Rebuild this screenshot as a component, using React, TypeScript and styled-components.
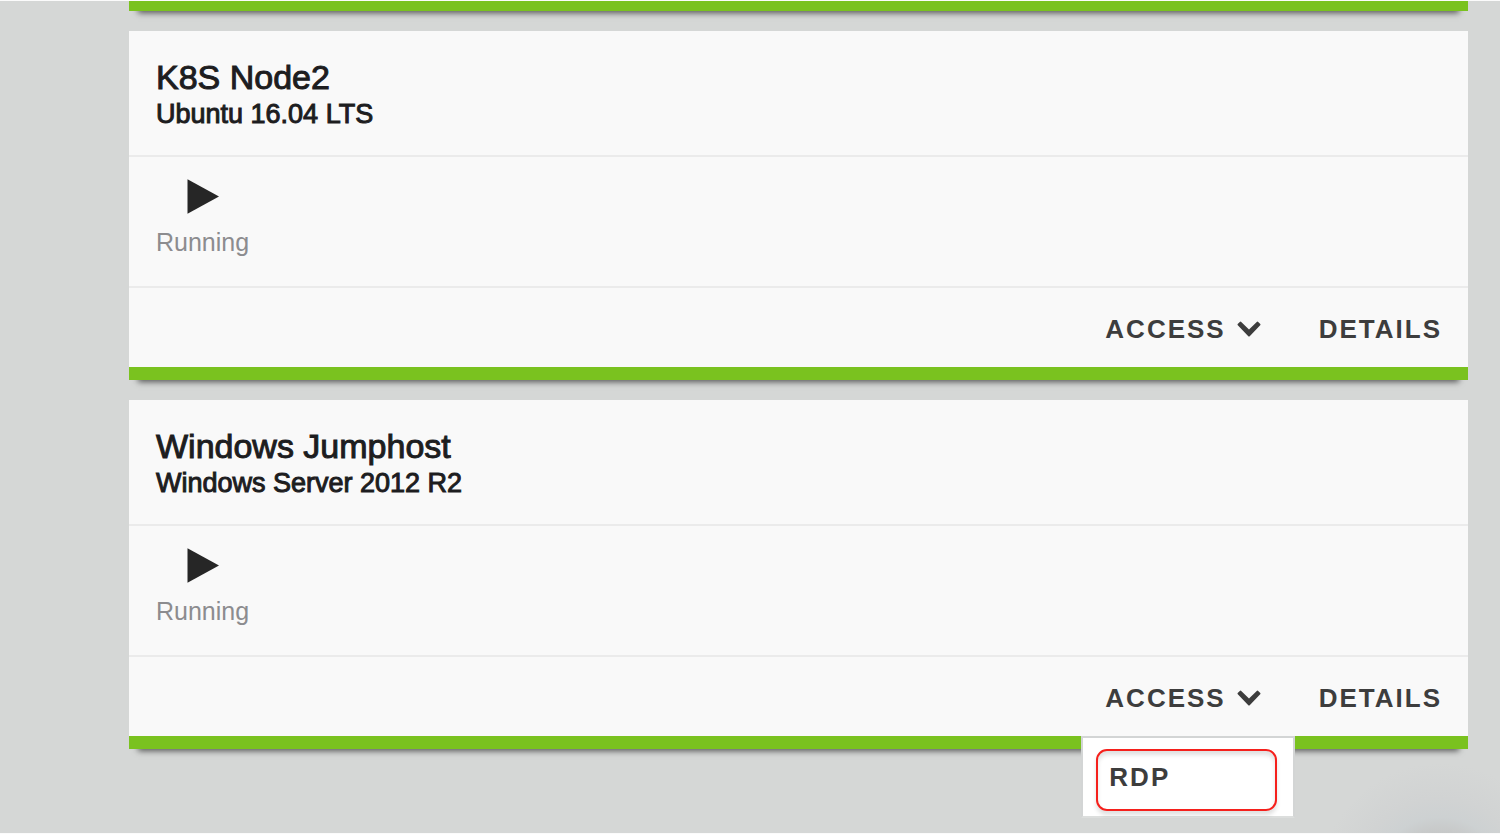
import React from 'react';
import styled, { createGlobalStyle } from 'styled-components';

const GlobalStyle = createGlobalStyle`
  *, *::before, *::after { box-sizing: border-box; }
  body {
    margin: 0;
    background: #d5d7d6;
    font-family: "Liberation Sans", Arial, Helvetica, sans-serif;
  }
`;

const Page = styled.main`
  min-height: 100vh;
  padding: 0 32px 84px 129px;
  border-top: 1px solid #fbfbfb;
  border-bottom: 1px solid #fbfbfb;
  background: radial-gradient(circle at right 60px bottom -50px, #c2c4c4 40px, #c8caca 54px, #cdd1d2 66px, #d1d3d3 85px, #d5d7d6 120px) #d5d7d6;
  overflow: clip;
`;

const MachineList = styled.div`
  display: flex;
  flex-direction: column;
  gap: 20px;
`;

const Card = styled.article`
  background: #f9f9f9;
  border-bottom: 13px solid #7ac21f;
  box-shadow: 0 11px 6px -9px rgba(0, 0, 0, 0.6);
`;

/* The card above the fold, scrolled out except for its status bar */
const ScrolledCard = styled(Card)`
  height: 92px;
  margin-top: -82px;
`;

const CardHeader = styled.header`
  padding: 27px 27px 23px;
  border-bottom: 2px solid #ebebeb;
  color: #1d1d1f;
`;

const Name = styled.h2`
  margin: 0;
  font-size: 34px;
  line-height: 38px;
  font-weight: 400;
  -webkit-text-stroke: 1px currentColor;
`;

const System = styled.p`
  margin: 0;
  font-size: 27px;
  line-height: 36px;
  -webkit-text-stroke: 1px currentColor;
`;

const Status = styled.section`
  display: flex;
  flex-direction: column;
  align-items: flex-start;
  padding: 22px 27px 25px;
  border-bottom: 2px solid #ebebeb;
`;

const StatusItem = styled.div`
  display: flex;
  flex-direction: column;
  align-items: center;
  gap: 10px;
  color: #8c8c8f;
  font-size: 25px;
  line-height: 37px;
`;

const Footer = styled.footer`
  display: flex;
  justify-content: flex-end;
  gap: 58px;
  height: 79px;
  padding: 0 26px;
`;

const MenuAnchor = styled.div`
  position: relative;
  display: flex;
`;

const ActionButton = styled.button`
  display: flex;
  align-items: center;
  gap: 11px;
  padding: 2px 0 0;
  border: 0;
  background: none;
  color: #3d3d3d;
  font-family: inherit;
  font-size: 26px;
  font-weight: 700;
  line-height: 30px;
  letter-spacing: 2px;
  cursor: pointer;
`;

const Menu = styled.div`
  position: absolute;
  top: 100%;
  left: -24px;
  width: 214px;
  padding: 11px 16px 5px 13px;
  border: 2px solid #d3d5d5;
  border-bottom-color: #dcdedd;
  background: #fff;
`;

const MenuItem = styled(ActionButton)`
  width: 100%;
  height: 62px;
  padding: 0 11px 6px;
  border: 2px solid #f5201c;
  border-radius: 11px;
  box-shadow: 0 4px 4px rgba(0, 0, 0, 0.12), inset 0 4px 4px rgba(0, 0, 0, 0.12);
`;

const PlayIcon = () => (
  <svg width="32" height="35" viewBox="0 0 32 35" aria-hidden="true">
    <path d="M0.5 0.3 L32 17.5 L0.5 34.7 Z" fill="#262626" />
  </svg>
);

const ChevronIcon = () => (
  <svg width="24" height="16" viewBox="0 0 24 16" aria-hidden="true">
    <path
      d="M4 0.8 L12 8.4 L20 0.8 Q20.6 0.4 21.2 0.9 L23.3 3 Q23.8 3.7 23.2 4.3 L12.7 15.2 Q12 15.8 11.3 15.2 L0.8 4.3 Q0.2 3.7 0.7 3 L2.8 0.9 Q3.4 0.4 4 0.8 Z"
      fill="#3d3d3d"
    />
  </svg>
);

interface Machine {
  name: string;
  system: string;
  accessOptions?: string[];
}

const machines: Machine[] = [
  { name: 'K8S Node2', system: 'Ubuntu 16.04 LTS' },
  { name: 'Windows Jumphost', system: 'Windows Server 2012 R2', accessOptions: ['RDP'] },
];

const MachineCard = ({ name, system, accessOptions }: Machine) => (
  <Card>
    <CardHeader>
      <Name>{name}</Name>
      <System>{system}</System>
    </CardHeader>
    <Status>
      <StatusItem>
        <PlayIcon />
        <span>Running</span>
      </StatusItem>
    </Status>
    <Footer>
      <MenuAnchor>
        <ActionButton type="button" aria-haspopup="menu" aria-expanded={Boolean(accessOptions)}>
          ACCESS
          <ChevronIcon />
        </ActionButton>
        {accessOptions && (
          <Menu role="menu">
            {accessOptions.map((option) => (
              <MenuItem key={option} type="button" role="menuitem">
                {option}
              </MenuItem>
            ))}
          </Menu>
        )}
      </MenuAnchor>
      <ActionButton type="button">DETAILS</ActionButton>
    </Footer>
  </Card>
);

export default function App() {
  return (
    <>
      <GlobalStyle />
      <Page>
        <MachineList>
          <ScrolledCard />
          {machines.map((machine) => (
            <MachineCard key={machine.name} {...machine} />
          ))}
        </MachineList>
      </Page>
    </>
  );
}
